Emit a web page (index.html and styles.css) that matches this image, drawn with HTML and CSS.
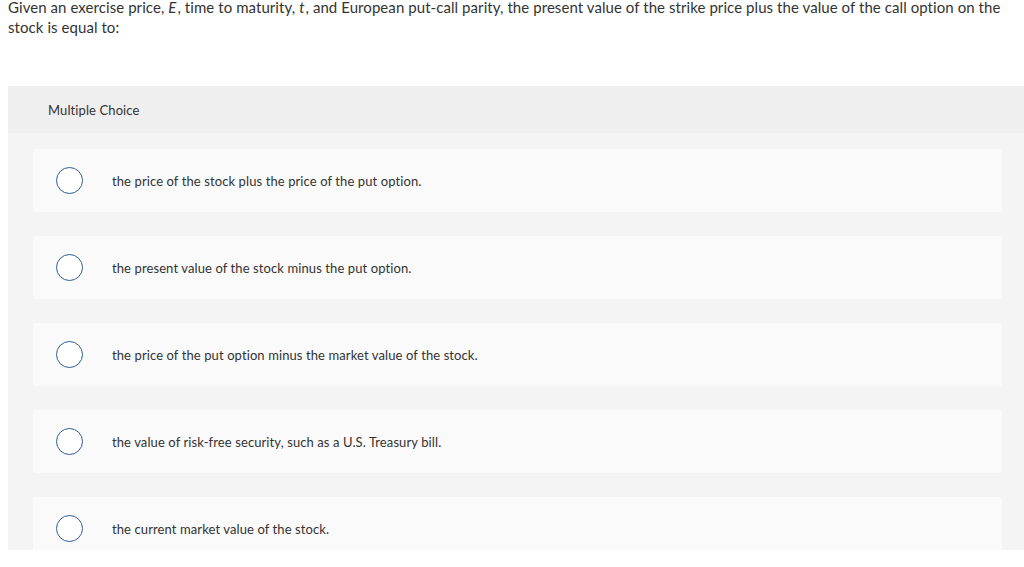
FILE: index.html
```html
<!DOCTYPE html>
<html>
<head>
<meta charset="utf-8">
<link rel="stylesheet" href="styles.css">
</head>
<body>
<div class="prompt">Given an exercise price, <i>E</i>, time to maturity, <i>t</i>, and European put-call parity, the present value of the strike price plus the value of the call option on the stock is equal to:</div>
<div class="question">
  <div class="qhead">Multiple Choice</div>
  <div class="choices">
    <div class="choice"><span class="radio"></span><span class="label">the price of the stock plus the price of the put option.</span></div>
    <div class="choice"><span class="radio"></span><span class="label">the present value of the stock minus the put option.</span></div>
    <div class="choice"><span class="radio"></span><span class="label">the price of the put option minus the market value of the stock.</span></div>
    <div class="choice"><span class="radio"></span><span class="label">the value of risk-free security, such as a U.S. Treasury bill.</span></div>
    <div class="choice"><span class="radio"></span><span class="label">the current market value of the stock.</span></div>
  </div>
</div>
</body>
</html>
```
FILE: styles.css
```css
html, body { margin: 0; padding: 0; background: #fff; }
body {
  padding-left: 8px;
  font-family: "Lato", "Liberation Sans", sans-serif;
  color: #333;
  overflow: hidden;
  height: 567px;
}
.prompt {
  font-size: 15px;
  line-height: 20px;
  width: 1005px;
  letter-spacing: 0.07px;
  margin-top: -3px;
}
.prompt i {
  padding-right: 1px;
}
.question {
  margin-top: 49px;
  width: 1016px;
  background: #f4f4f4;
}
.qhead {
  background: #efefef;
  height: 47px;
  padding-left: 40px;
  font-size: 13px;
  line-height: 49px;
  letter-spacing: 0.1px;
}
.choices {
  padding: 16px 22px 0 25px;
  height: 401px;
  overflow: hidden;
  display: flex;
  flex-direction: column;
  gap: 24px;
}
.choice {
  background: #fafafa;
  height: 63px;
  flex: none;
  display: flex;
  align-items: center;
  padding-left: 23px;
  border-radius: 3px;
}
.radio {
  width: 25px;
  height: 25px;
  border: 1.3px solid #2c5d94;
  border-radius: 50%;
  background: #fff;
  flex: none;
}
.label {
  margin-left: 29px;
  font-size: 13px;
  letter-spacing: 0.1px;
  padding-top: 1px;
}
```
